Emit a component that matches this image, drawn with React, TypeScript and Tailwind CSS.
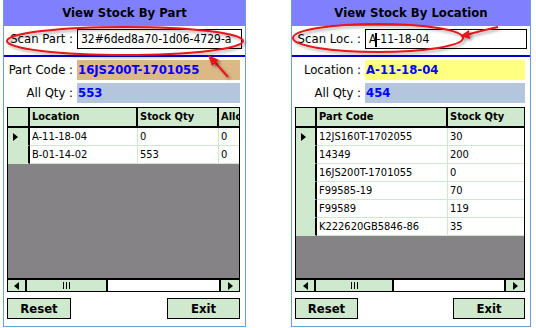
import React from "react";

const F = "font-['DejaVu_Sans_Condensed','DejaVu_Sans',sans-serif]";

function Tri({ dir }: { dir: "r" | "l" }) {
  return (
    <svg width="5" height="8" viewBox="0 0 5 8">
      {dir === "r" ? <polygon points="0,0 5,4 0,8" fill="#000" /> : <polygon points="5,0 0,4 5,8" fill="#000" />}
    </svg>
  );
}

type Col = { title: string; w: number };

function Grid({ cols, rows, rowHeadW, thumbW, leftArrowW }: { cols: Col[]; rows: string[][]; rowHeadW: number; thumbW: number; leftArrowW: number }) {
  const last = cols.length - 1;
  return (
    <div className="flex flex-col border border-black bg-[#858386] h-[185px] overflow-hidden">
      <div className="flex h-[20px] bg-[#cfe9cf] border-b-2 border-black shrink-0">
        <div className="border-r-2 border-black shrink-0" style={{ width: rowHeadW }} />
        {cols.map((c, i) => (
          <div
            key={i}
            className={`${i === last ? "flex-1 min-w-0" : "shrink-0 border-r-2 border-black"} overflow-hidden whitespace-nowrap pl-[2px] text-[11px] font-bold leading-[18px]`}
            style={i === last ? undefined : { width: c.w }}
          >
            {c.title}
          </div>
        ))}
      </div>
      {rows.map((r, ri) => (
        <div key={ri} className="flex h-[18px] shrink-0 bg-white">
          <div className="bg-[#cfe9cf] border-r-2 border-black border-b border-b-[#cfe9cf] shrink-0 flex items-center pl-[5px]" style={{ width: rowHeadW }}>
            {ri === 0 && <Tri dir="r" />}
          </div>
          {r.map((v, ci) => (
            <div
              key={ci}
              className={`${ci === last ? "flex-1 min-w-0" : "shrink-0 border-r"} border-b border-[#cfe9cf] overflow-hidden whitespace-nowrap pl-[2px] text-[11px] leading-[17px]`}
              style={ci === last ? undefined : { width: cols[ci].w }}
            >
              {v}
            </div>
          ))}
        </div>
      ))}
      <div className="flex-1" />
      <div className="flex h-[13px] border-t-2 border-black shrink-0 bg-white">
        <div className="bg-[#cfe9cf] border-r-2 border-black flex items-center justify-center" style={{ width: leftArrowW }}>
          <Tri dir="l" />
        </div>
        <div className="bg-[#cfe9cf] border-r-2 border-black flex items-center justify-center" style={{ width: thumbW }}>
          <div className="flex gap-[2px] h-[7px]">
            <div className="w-px bg-black" />
            <div className="w-px bg-black" />
            <div className="w-px bg-black" />
          </div>
        </div>
        <div className="flex-1" />
        <div className="bg-[#cfe9cf] border-l-2 border-black w-[20px] flex items-center justify-center">
          <Tri dir="r" />
        </div>
      </div>
    </div>
  );
}

function Panel(props: {
  title: string;
  scanLabel: string;
  scanValue: React.ReactNode;
  l1: string;
  v1: string;
  c1: string;
  qty: string;
  labelW: number;
  width: number;
  cols: Col[];
  rows: string[][];
  rowHeadW: number;
  thumbW: number;
  leftArrowW: number;
  resetW: number;
  exitW: number;
  gridPad: number;
}) {
  return (
    <div className="flex flex-col h-[327px] border border-t-0 border-[#6b9fd8] shrink-0" style={{ width: props.width }}>
      <div className="h-[26px] bg-[#8080ff] flex items-center justify-center text-[13px] font-bold text-black">{props.title}</div>
      <div className="flex items-center h-[20px] mt-[3px]">
        <div className="text-[13px] text-right pr-[4px] shrink-0 whitespace-nowrap" style={{ width: props.labelW }}>
          {props.scanLabel}
        </div>
        <div className="flex-1 h-[20px] border border-black bg-white text-[12px] leading-[18px] pl-[3px] whitespace-nowrap overflow-hidden mr-[3px]">
          {props.scanValue}
        </div>
      </div>
      <div className="h-[2px] bg-[#0000d0] mt-[6px]" />
      <div className="flex items-center h-[20px] mt-[3px]">
        <div className="text-[13px] text-right pr-[4px] shrink-0 whitespace-nowrap" style={{ width: props.labelW }}>
          {props.l1}
        </div>
        <div className="flex-1 h-[20px] text-[13px] font-bold text-[#0000ff] leading-[20px] pl-[1px] mr-[5px]" style={{ background: props.c1 }}>
          {props.v1}
        </div>
      </div>
      <div className="flex items-center h-[20px] mt-[3px]">
        <div className="text-[13px] text-right pr-[4px] shrink-0 whitespace-nowrap" style={{ width: props.labelW }}>
          All Qty :
        </div>
        <div className="flex-1 h-[20px] bg-[#b4c6de] text-[13px] font-bold text-[#0000ff] leading-[20px] pl-[1px] mr-[5px]">{props.qty}</div>
      </div>
      <div className="mt-[4px] mr-[5px]" style={{ marginLeft: props.gridPad }}>
        <Grid cols={props.cols} rows={props.rows} rowHeadW={props.rowHeadW} thumbW={props.thumbW} leftArrowW={props.leftArrowW} />
      </div>
      <div className="flex justify-between mt-[6px] mr-[5px]" style={{ marginLeft: props.gridPad }}>
        <div className="h-[21px] bg-[#cfe9cf] border border-black text-[13px] font-bold flex items-center justify-center" style={{ width: props.resetW }}>
          Reset
        </div>
        <div className="h-[21px] bg-[#cfe9cf] border border-black text-[13px] font-bold flex items-center justify-center" style={{ width: props.exitW }}>
          Exit
        </div>
      </div>
    </div>
  );
}

export default function App() {
  return (
    <div className={`relative w-[536px] h-[328px] bg-white overflow-hidden text-black ${F}`}>
      <div className="flex">
        <div className="ml-[3px]">
          <Panel
            title="View Stock By Part"
            scanLabel="Scan Part :"
            scanValue="32#6ded8a70-1d06-4729-a"
            l1="Part Code :"
            v1="16JS200T-1701055"
            c1="#dcb887"
            qty="553"
            labelW={73}
            width={243}
            cols={[
              { title: "Location", w: 108 },
              { title: "Stock Qty", w: 81 },
              { title: "Allocated", w: 30 },
            ]}
            rows={[
              ["A-11-18-04", "0", "0"],
              ["B-01-14-02", "553", "0"],
            ]}
            rowHeadW={22}
            thumbW={81}
            leftArrowW={19}
            resetW={64}
            exitW={73}
            gridPad={3}
          />
        </div>
        <div className="ml-[45px]">
          <Panel
            title="View Stock By Location"
            scanLabel="Scan Loc. :"
            scanValue={
              <span>
                A<span className="inline-block w-[2px] h-[14px] bg-black align-middle -mx-[1px]" />-11-18-04
              </span>
            }
            l1="Location :"
            v1="A-11-18-04"
            c1="#ffff80"
            qty="454"
            labelW={73}
            width={240}
            cols={[
              { title: "Part Code", w: 131 },
              { title: "Stock Qty", w: 77 },
            ]}
            rows={[
              ["12JS160T-1702055", "30"],
              ["14349", "200"],
              ["16JS200T-1701055", "0"],
              ["F99585-19", "70"],
              ["F99589", "119"],
              ["K222620GB5846-86", "35"],
            ]}
            rowHeadW={21}
            thumbW={78}
            leftArrowW={20}
            resetW={63}
            exitW={72}
            gridPad={3}
          />
        </div>
      </div>
      <svg className="absolute left-0 top-0 pointer-events-none" width="536" height="328" viewBox="0 0 536 328">
        <defs>
          <filter id="sh" x="-10%" y="-50%" width="120%" height="200%">
            <feDropShadow dx="2" dy="2" stdDeviation="1.5" floodColor="#000" floodOpacity="0.35" />
          </filter>
        </defs>
        <g filter="url(#sh)" fill="none" stroke="#e8141c" strokeWidth="2">
          <ellipse cx="125" cy="41" rx="118" ry="14" />
          <line x1="228" y1="77" x2="213" y2="60" />
          <ellipse cx="378" cy="38" rx="85" ry="14" />
          <path d="M498 27 Q480 31 466 35" />
        </g>
        <g filter="url(#sh)" fill="#e8141c">
          <polygon points="208,55 219,60 212,66" />
          <polygon points="460,36 469,30 470,39" />
        </g>
      </svg>
    </div>
  );
}
